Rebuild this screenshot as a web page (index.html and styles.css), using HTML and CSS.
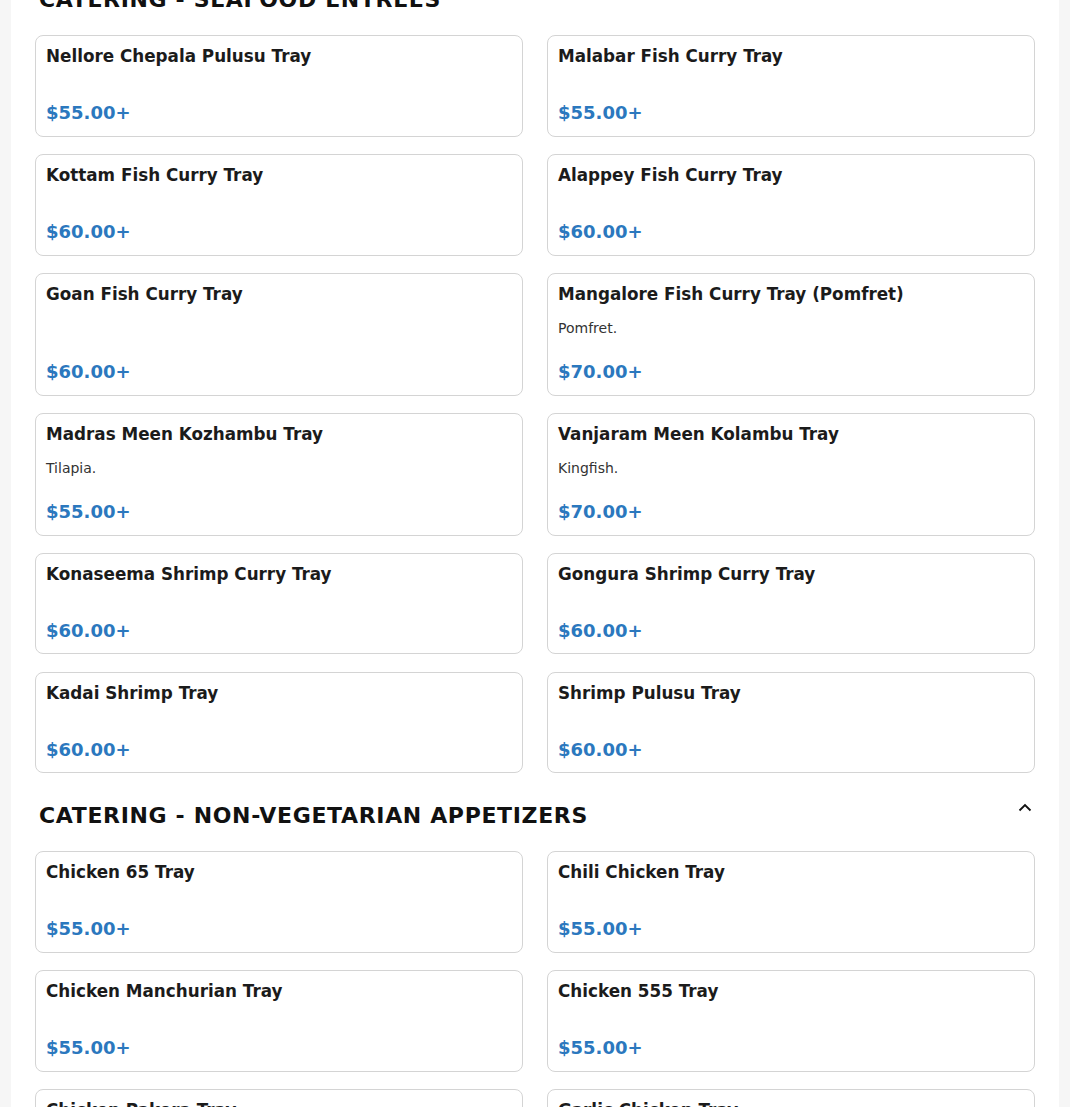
FILE: index.html
```html
<!DOCTYPE html>
<html lang="en">

<head>
    <meta charset="UTF-8">
    <meta name="viewport" content="width=device-width, initial-scale=1.0">
    <title>Catering Menu</title>
    <link rel="stylesheet" href="styles.css">
</head>

<body>
    <div class="menu">
        <section class="menu-section">
            <div class="section-head">
                <h2>Catering - Seafood Entrees</h2>
                <svg class="chevron" width="14" height="14" viewBox="0 0 14 14"><polyline points="1.5,8.5 7,3 12.5,8.5" /></svg>
            </div>
            <div class="item-grid">
                <div class="item-card">
                    <h3>Nellore Chepala Pulusu Tray</h3>
                    <div class="price">$55.00+</div>
                </div>
                <div class="item-card">
                    <h3>Malabar Fish Curry Tray</h3>
                    <div class="price">$55.00+</div>
                </div>
                <div class="item-card">
                    <h3>Kottam Fish Curry Tray</h3>
                    <div class="price">$60.00+</div>
                </div>
                <div class="item-card">
                    <h3>Alappey Fish Curry Tray</h3>
                    <div class="price">$60.00+</div>
                </div>
                <div class="item-card">
                    <h3>Goan Fish Curry Tray</h3>
                    <div class="price">$60.00+</div>
                </div>
                <div class="item-card">
                    <h3>Mangalore Fish Curry Tray (Pomfret)</h3>
                    <p class="desc">Pomfret.</p>
                    <div class="price">$70.00+</div>
                </div>
                <div class="item-card">
                    <h3>Madras Meen Kozhambu Tray</h3>
                    <p class="desc">Tilapia.</p>
                    <div class="price">$55.00+</div>
                </div>
                <div class="item-card">
                    <h3>Vanjaram Meen Kolambu Tray</h3>
                    <p class="desc">Kingfish.</p>
                    <div class="price">$70.00+</div>
                </div>
                <div class="item-card">
                    <h3>Konaseema Shrimp Curry Tray</h3>
                    <div class="price">$60.00+</div>
                </div>
                <div class="item-card">
                    <h3>Gongura Shrimp Curry Tray</h3>
                    <div class="price">$60.00+</div>
                </div>
                <div class="item-card">
                    <h3>Kadai Shrimp Tray</h3>
                    <div class="price">$60.00+</div>
                </div>
                <div class="item-card">
                    <h3>Shrimp Pulusu Tray</h3>
                    <div class="price">$60.00+</div>
                </div>
            </div>
        </section>

        <section class="menu-section">
            <div class="section-head">
                <h2>Catering - Non-Vegetarian Appetizers</h2>
                <svg class="chevron" width="14" height="14" viewBox="0 0 14 14"><polyline points="1.5,8.5 7,3 12.5,8.5" /></svg>
            </div>
            <div class="item-grid">
                <div class="item-card">
                    <h3>Chicken 65 Tray</h3>
                    <div class="price">$55.00+</div>
                </div>
                <div class="item-card">
                    <h3>Chili Chicken Tray</h3>
                    <div class="price">$55.00+</div>
                </div>
                <div class="item-card">
                    <h3>Chicken Manchurian Tray</h3>
                    <div class="price">$55.00+</div>
                </div>
                <div class="item-card">
                    <h3>Chicken 555 Tray</h3>
                    <div class="price">$55.00+</div>
                </div>
                <div class="item-card">
                    <h3>Chicken Pakora Tray</h3>
                    <div class="price">$55.00+</div>
                </div>
                <div class="item-card">
                    <h3>Garlic Chicken Tray</h3>
                    <div class="price">$55.00+</div>
                </div>
            </div>
        </section>
    </div>
</body>

</html>
```

FILE: styles.css
```css
* {
    box-sizing: border-box;
}

body {
    margin: 0;
    font-family: 'DejaVu Sans', Verdana, sans-serif;
    background-color: #f6f6f6;
    color: #1b1b1b;
}

/* page is shown scrolled a little, so the first heading is cut off */
.menu {
    max-width: 1048px;
    margin: -14px auto 0;
    padding: 0 24px;
    background-color: #fff;
}

.menu-section {
    margin-bottom: 29px;
}

.section-head {
    display: flex;
    justify-content: space-between;
    align-items: flex-start;
    padding: 0 2px 0 4px;
    margin-bottom: 21px;
}

.section-head h2 {
    margin: 0;
    font-size: 22px;
    line-height: 28px;
    font-weight: bold;
    text-transform: uppercase;
    letter-spacing: 0.65px;
    color: #111;
}

.chevron {
    fill: none;
    stroke: #111;
    stroke-width: 1.8;
    margin-right: 1px;
}

.item-grid {
    display: grid;
    grid-template-columns: 1fr 1fr;
    column-gap: 24px;
    row-gap: 17.3px;
}

.item-card {
    display: flex;
    flex-direction: column;
    padding: 10px 10px 11.67px;
    border: 1px solid #d4d4d4;
    border-radius: 8px;
}

.item-card h3 {
    margin: 0 0 14px;
    font-size: 16.8px;
    line-height: 20px;
    font-weight: bold;
    color: #1b1b1b;
}

.desc {
    margin: 0;
    font-size: 14px;
    line-height: 21px;
    color: #333;
}

.price {
    margin-top: auto;
    padding-top: 22px;
    font-size: 18px;
    line-height: 22px;
    font-weight: bold;
    color: #2b78be;
}
```
